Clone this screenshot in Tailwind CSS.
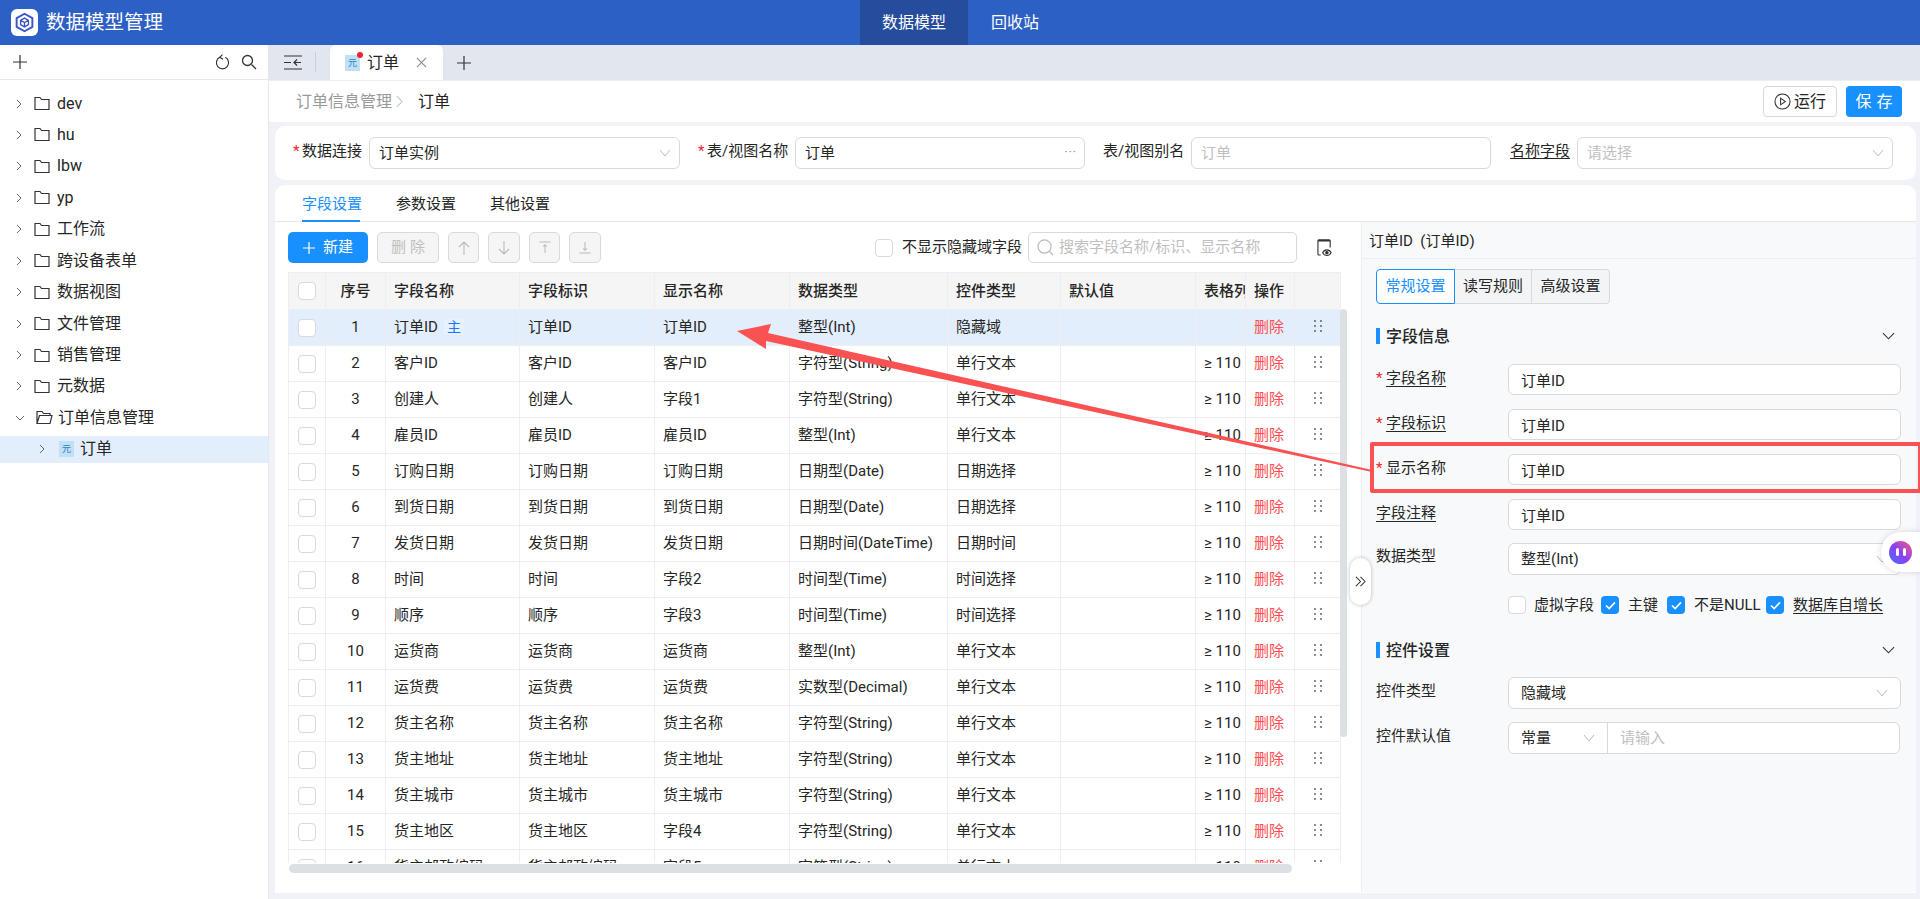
<!DOCTYPE html>
<html lang="zh">
<head>
  <meta charset="UTF-8" />
  <title>数据模型管理</title>
  <script src="https://cdn.jsdelivr.net/npm/@tailwindcss/browser@4"></script>
</head>
<body class="bg-[#f0f2f7] text-[15px] text-[#262626] font-['Roboto','Noto_Sans_CJK_SC',sans-serif]">
<div class="relative w-[1920px] h-[899px] overflow-hidden">

  <!-- top bar -->
  <header class="h-[45px] bg-[#2d60c4] flex text-white">
    <div class="w-[860px] flex items-center pl-[11px]">
      <div class="w-[27px] h-[27px] bg-white rounded-[6px] flex items-center justify-center">
        <svg viewBox="0 0 24 24" class="w-[21px] h-[21px]" fill="none" stroke="#3a55c8" stroke-width="2.200"><path d="M12 2l9 5v10l-9 5-9-5V7z"/><path d="M7.500 9.500L12 7l4.500 2.500v5L12 17l-4.500-2.500z M7.500 9.500L12 12l4.500-2.500M12 12v5" stroke-width="1.500"/></svg>
      </div>
      <span class="ml-[8px] text-[19.500px] whitespace-nowrap">数据模型管理</span>
    </div>
    <div class="w-[108px] bg-[#264d9d] flex items-center justify-center text-[16px]">数据模型</div>
    <div class="w-[94px] flex items-center justify-center text-[16px]">回收站</div>
  </header>

  <div class="flex h-[854px]">
    <!-- tree -->
    <aside class="w-[269px] bg-white border-r border-[#e5e7eb] shrink-0">
      <div class="h-[35px] border-b border-[#e8e8e8] flex items-center pl-[13px] pr-[11px]">
        <svg viewBox="0 0 14 14" class="w-[14px] h-[14px]" stroke="#333" stroke-width="1.200"><path d="M7 0v14M0 7h14"/></svg>
        <svg viewBox="0 0 16 18" class="w-[15px] h-[17px] ml-auto" fill="none" stroke="#333" stroke-width="1.200"><path d="M5 3.500a6.500 6.500 0 1 0 6 0M8 0.500L5 3.500l3.500 2"/></svg>
        <svg viewBox="0 0 16 16" class="w-[16px] h-[16px] ml-[11px]" fill="none" stroke="#333" stroke-width="1.300"><circle cx="6.500" cy="6.500" r="5"/><path d="M10.500 10.500L15 15"/></svg>
      </div>
      <div id="tree" class="pt-[10px]"></div>
    </aside>

    <!-- main column -->
    <main class="flex-1 min-w-0">
      <div class="h-[35px] bg-[#e2e6ef] flex items-end">
        <div class="w-[46px] h-[35px] flex items-center pl-[15px]">
          <svg viewBox="0 0 18 15" class="w-[18px] h-[15px]" fill="none" stroke="#333" stroke-width="1.200"><path d="M0 1h18M0 14h18M0 7.500h7M17 7.500h-7M13 4.500l-3 3 3 3"/></svg>
        </div>
        <div class="w-px h-[20px] bg-[#c9ced8] mb-[8px]"></div>
        <div class="ml-[14px] w-[113px] h-[35px] bg-white rounded-t-[6px] flex items-center pl-[15px]">
          <span class="relative w-[15px] h-[16px] bg-[#bfe0f5] text-[#2a7fb8] text-[9px] leading-[16px] text-center">元<span class="absolute -top-[3px] -right-[3px] w-[6px] h-[6px] rounded-full bg-[#f5222d]"></span></span>
          <span class="ml-[7px] text-[16px]">订单</span>
          <svg viewBox="0 0 12 12" class="w-[11px] h-[11px] ml-[17px]" stroke="#888" stroke-width="1.100"><path d="M1 1l10 10M11 1L1 11"/></svg>
        </div>
        <svg viewBox="0 0 14 14" class="w-[14px] h-[14px] ml-[14px] mb-[10px]" stroke="#333" stroke-width="1.200"><path d="M7 0v14M0 7h14"/></svg>
      </div>

      <!-- breadcrumb -->
      <div class="h-[42px] bg-white border-t border-[#eceef2] flex items-center pl-[27px] pr-[18px]">
        <span class="text-[16px] text-[#999]">订单信息管理</span>
        <svg viewBox="0 0 8 14" class="w-[7px] h-[13px] ml-[4px]" fill="none" stroke="#999" stroke-width="1"><path d="M1 1l6 6-6 6"/></svg>
        <span class="ml-[15px] text-[16px] text-[#222]">订单</span>
        <button class="ml-auto w-[74px] h-[31px] border border-[#d9d9d9] rounded-[4px] bg-white flex items-center justify-center gap-[3px] text-[16px]">
          <svg viewBox="0 0 18 18" class="w-[17px] h-[17px]" fill="none" stroke="#333" stroke-width="1.100"><circle cx="9" cy="9" r="8"/><path d="M7 5.500l5 3.500-5 3.500z"/></svg>运行
        </button>
        <button class="ml-[9px] w-[56px] h-[31px] rounded-[4px] bg-[#1890ff] text-white text-[16px] tracking-[5px] pl-[5px]">保存</button>
      </div>

      <!-- connection form -->
      <div class="mt-[4px] ml-[6px] mr-[4px] h-[54px] bg-white rounded-[10px] flex items-center pl-[18px] whitespace-nowrap">
        <label class="w-[68px] -mt-[3px]"><span class="text-[#f5222d] inline-block w-[9px]">*</span>数据连接</label>
        <div class="ml-[8px] w-[311px] h-[32px] border border-[#d9d9d9] rounded-[6px] flex items-center justify-between pl-[9px] pr-[8px]">订单实例
          <svg viewBox="0 0 12 8" class="w-[12px] h-[8px]" fill="none" stroke="#bbb"><path d="M1 1l5 6 5-6"/></svg>
        </div>
        <label class="ml-[18px] w-[89px] -mt-[3px]"><span class="text-[#f5222d] inline-block w-[9px]">*</span>表/视图名称</label>
        <div class="ml-[8px] w-[290px] h-[32px] border border-[#d9d9d9] rounded-[6px] flex items-center justify-between pl-[9px] pr-[7px]">订单<span class="text-[#888] text-[12px] tracking-[1px] -mt-[2px]">···</span></div>
        <label class="ml-[18px] w-[80px] -mt-[3px]">表/视图别名</label>
        <input placeholder="订单" class="ml-[8px] w-[300px] h-[32px] border border-[#d9d9d9] rounded-[6px] px-[9px] placeholder-[#bfbfbf]" />
        <label class="ml-[19px] w-[59px] -mt-[3px] underline underline-offset-2">名称字段</label>
        <div class="ml-[8px] w-[316px] h-[32px] border border-[#d9d9d9] rounded-[6px] flex items-center justify-between pl-[9px] pr-[8px] text-[#bfbfbf]">请选择
          <svg viewBox="0 0 12 8" class="w-[12px] h-[8px]" fill="none" stroke="#bbb"><path d="M1 1l5 6 5-6"/></svg>
        </div>
      </div>

      <!-- field designer card -->
      <div class="mt-[5px] ml-[6px] mr-[4px] h-[708px] bg-white rounded-t-[10px] overflow-hidden">
        <div class="h-[37px] border-b border-[#e8e8e8] flex pl-[27px] gap-[36px]">
          <span class="w-[58px] h-[37px] leading-[39px] text-[#1890ff] border-b-2 border-[#1890ff] whitespace-nowrap">字段设置</span>
          <span class="w-[58px] leading-[39px] whitespace-nowrap">参数设置</span>
          <span class="w-[58px] leading-[39px] whitespace-nowrap">其他设置</span>
        </div>
        <div class="flex h-[670px]">
          <!-- left: table -->
          <section class="w-[1086px] shrink-0 pl-[13px] pt-[10px]">
            <div class="flex items-center h-[31px]">
              <button class="w-[80px] h-[31px] bg-[#1890ff] text-white rounded-[5px] flex items-center justify-center gap-[8px]">
                <svg viewBox="0 0 12 12" class="w-[12px] h-[12px]" stroke="#fff" stroke-width="1.200"><path d="M6 0v12M0 6h12"/></svg>新建
              </button>
              <button class="ml-[9px] w-[62px] h-[31px] bg-[#f5f5f5] border border-[#d9d9d9] rounded-[5px] text-[#bfbfbf] tracking-[4px] pl-[4px]">删除</button>
              <button class="ml-[9px] w-[31px] h-[31px] bg-[#f5f5f5] border border-[#d9d9d9] rounded-[5px] flex items-center justify-center"><svg viewBox="0 0 12 14" class="w-[12px] h-[14px]" fill="none" stroke="#bbb" stroke-width="1.100"><path d="M6 14V1M1 6l5-5 5 5"/></svg></button>
              <button class="ml-[9px] w-[32px] h-[31px] bg-[#f5f5f5] border border-[#d9d9d9] rounded-[5px] flex items-center justify-center"><svg viewBox="0 0 12 14" class="w-[12px] h-[14px]" fill="none" stroke="#bbb" stroke-width="1.100"><path d="M6 0v13M1 8l5 5 5-5"/></svg></button>
              <button class="ml-[9px] w-[31px] h-[31px] bg-[#f5f5f5] border border-[#d9d9d9] rounded-[5px] flex items-center justify-center"><svg viewBox="0 0 12 14" class="w-[12px] h-[13px]" fill="none" stroke="#bbb" stroke-width="1.100"><path d="M0 1h12M6 13V4M4 6l2-2 2 2"/></svg></button>
              <button class="ml-[9px] w-[32px] h-[31px] bg-[#f5f5f5] border border-[#d9d9d9] rounded-[5px] flex items-center justify-center"><svg viewBox="0 0 12 14" class="w-[12px] h-[13px]" fill="none" stroke="#bbb" stroke-width="1.100"><path d="M0 13h12M6 1v9M4 8l2 2 2-2"/></svg></button>
              <span class="ml-[274px] w-[18px] h-[18px] border border-[#d9d9d9] rounded-[4px] bg-white"></span>
              <span class="ml-[9px] w-[117px] whitespace-nowrap">不显示隐藏域字段</span>
              <div class="ml-[9px] w-[269px] h-[31px] border border-[#d9d9d9] rounded-[5px] flex items-center pl-[8px] text-[#bfbfbf] whitespace-nowrap">
                <svg viewBox="0 0 18 18" class="w-[17px] h-[17px] mr-[5px]" fill="none" stroke="#bbb" stroke-width="1.300"><circle cx="8" cy="8" r="7"/><path d="M13 13l4 4"/></svg>搜索字段名称/标识、显示名称
              </div>
              <svg viewBox="0 0 17 19" class="w-[16px] h-[18px] ml-[20px]" fill="none" stroke="#333" stroke-width="1.200"><path d="M14 9V2a1 1 0 0 0-1-1H2a1 1 0 0 0-1 1v14a1 1 0 0 0 1 1h2"/><path d="M1 1.500h13" stroke-width="2"/><path d="M6 14.500c1-2 2.500-3 4.500-3s3.500 1 4.500 3c-1 2-2.500 3-4.500 3s-3.500-1-4.500-3z"/><circle cx="10.500" cy="14.500" r="1.300" fill="#333"/></svg>
            </div>

            <!-- table, clipped by the scroll box -->
            <div class="relative mt-[9px] w-[1059px] h-[601px]">
              <div class="h-[591px] overflow-hidden">
                <table class="table-fixed w-[1052px] border-collapse">
                  <colgroup>
                    <col class="w-[37px]"><col class="w-[60px]"><col class="w-[134px]"><col class="w-[135px]"><col class="w-[135px]"><col class="w-[158px]"><col class="w-[113px]"><col class="w-[135px]"><col class="w-[50px]"><col class="w-[49px]"><col class="w-[46px]">
                  </colgroup>
                  <thead class="bg-[#f5f5f5]">
                    <tr class="h-[37px]">
                      <th class="border border-[#eeeeee] pl-[9px]"><span class="block w-[18px] h-[18px] border border-[#d9d9d9] rounded-[4px] bg-white"></span></th>
                      <th class="border border-[#eeeeee] font-medium text-center">序号</th>
                      <th class="border border-[#eeeeee] font-medium text-left pl-[8px]">字段名称</th>
                      <th class="border border-[#eeeeee] font-medium text-left pl-[8px]">字段标识</th>
                      <th class="border border-[#eeeeee] font-medium text-left pl-[8px]">显示名称</th>
                      <th class="border border-[#eeeeee] font-medium text-left pl-[8px]">数据类型</th>
                      <th class="border border-[#eeeeee] font-medium text-left pl-[8px]">控件类型</th>
                      <th class="border border-[#eeeeee] font-medium text-left pl-[8px]">默认值</th>
                      <th class="border border-[#eeeeee] font-medium text-left pl-[8px] overflow-hidden whitespace-nowrap">表格列</th>
                      <th class="border border-[#eeeeee] font-medium text-left pl-[8px]">操作</th>
                      <th class="border border-[#eeeeee]"></th>
                    </tr>
                  </thead>
                  <tbody id="rows"></tbody>
                </table>
              </div>
              <div class="absolute left-[1px] top-[592px] w-[1003px] h-[9px] rounded-full bg-[#dcdfe4]"></div>
              <div class="absolute left-[1052px] top-[37px] w-[7px] h-[428px] rounded-full bg-[#dcdfe4]"></div>
            </div>
          </section>

          <!-- right: properties -->
          <section class="flex-1 bg-[#f8f9fb] border-l border-[#eceef2] pl-[14px] pr-[15px]">
            <div class="h-[37px] -ml-[14px] -mr-[15px] pl-[7px] pt-[3px] border-b border-[#eceef2] flex items-center whitespace-pre">订单ID  (订单ID)</div>
            <div class="mt-[10px] flex w-[234px] h-[35px]">
              <span class="w-[79px] bg-white border border-[#1890ff] text-[#1890ff] rounded-l-[4px] flex items-center justify-center">常规设置</span>
              <span class="w-[77px] bg-[#f3f4f6] border-y border-r border-[#d9d9d9] flex items-center justify-center">读写规则</span>
              <span class="w-[78px] bg-[#f3f4f6] border-y border-r border-[#d9d9d9] rounded-r-[4px] flex items-center justify-center">高级设置</span>
            </div>

            <div class="mt-[22px] h-[20px] flex items-center pr-[6px]">
              <span class="w-[4px] h-[16px] bg-[#1890ff]"></span>
              <b class="ml-[6px] pt-[2px] text-[16px] font-medium">字段信息</b>
              <svg viewBox="0 0 14 8" class="w-[13px] h-[8px] ml-auto" fill="none" stroke="#333" stroke-width="1.200"><path d="M1 1l6 6 6-6"/></svg>
            </div>

            <div class="mt-[18px] flex items-start h-[31px]">
              <label class="w-[132px] whitespace-nowrap pt-[3px]"><span class="text-[#f5222d] inline-block w-[10px]">*</span><span class="underline underline-offset-3">字段名称</span></label>
              <input value="订单ID" class="w-[393px] h-[31px] border border-[#d9d9d9] rounded-[6px] bg-white px-[12px]" />
            </div>
            <div class="mt-[14px] flex items-start h-[31px]">
              <label class="w-[132px] whitespace-nowrap pt-[3px]"><span class="text-[#f5222d] inline-block w-[10px]">*</span><span class="underline underline-offset-3">字段标识</span></label>
              <input value="订单ID" class="w-[393px] h-[31px] border border-[#d9d9d9] rounded-[6px] bg-white px-[12px]" />
            </div>
            <div class="mt-[14px] flex items-start h-[31px]">
              <label class="w-[132px] whitespace-nowrap pt-[3px]"><span class="text-[#f5222d] inline-block w-[10px]">*</span>显示名称</label>
              <input value="订单ID" class="w-[393px] h-[31px] border border-[#d9d9d9] rounded-[6px] bg-white px-[12px]" />
            </div>
            <div class="mt-[14px] flex items-start h-[31px]">
              <label class="w-[132px] pt-[3px]"><span class="underline underline-offset-3">字段注释</span></label>
              <input value="订单ID" class="w-[393px] h-[31px] border border-[#d9d9d9] rounded-[6px] bg-white px-[12px]" />
            </div>
            <div class="mt-[13px] flex items-start h-[32px]">
              <label class="w-[132px] pt-[2px]">数据类型</label>
              <div class="w-[393px] h-[32px] border border-[#d9d9d9] rounded-[6px] bg-white px-[12px] flex items-center justify-between">整型(Int)
                <svg viewBox="0 0 12 8" class="w-[12px] h-[8px]" fill="none" stroke="#bbb"><path d="M1 1l5 6 5-6"/></svg>
              </div>
            </div>

            <div class="mt-[21px] ml-[132px] flex items-center h-[18px] whitespace-nowrap">
              <span class="w-[18px] h-[18px] border border-[#d9d9d9] rounded-[4px] bg-white"></span>
              <span class="ml-[8px] w-[60px]">虚拟字段</span>
              <span class="ml-[7px] w-[18px] h-[18px] rounded-[4px] bg-[#1890ff] flex items-center justify-center"><svg viewBox="0 0 12 10" class="w-[11px] h-[9px]" fill="none" stroke="#fff" stroke-width="1.800"><path d="M1 5l3.500 3.500L11 1.500"/></svg></span>
              <span class="ml-[9px] w-[30px]">主键</span>
              <span class="ml-[9px] w-[18px] h-[18px] rounded-[4px] bg-[#1890ff] flex items-center justify-center"><svg viewBox="0 0 12 10" class="w-[11px] h-[9px]" fill="none" stroke="#fff" stroke-width="1.800"><path d="M1 5l3.500 3.500L11 1.500"/></svg></span>
              <span class="ml-[9px] w-[63px]">不是NULL</span>
              <span class="ml-[9px] w-[18px] h-[18px] rounded-[4px] bg-[#1890ff] flex items-center justify-center"><svg viewBox="0 0 12 10" class="w-[11px] h-[9px]" fill="none" stroke="#fff" stroke-width="1.800"><path d="M1 5l3.500 3.500L11 1.500"/></svg></span>
              <span class="ml-[9px] underline underline-offset-3">数据库自增长</span>
            </div>

            <div class="mt-[26px] h-[20px] flex items-center pr-[6px]">
              <span class="w-[4px] h-[16px] bg-[#1890ff]"></span>
              <b class="ml-[6px] pt-[2px] text-[16px] font-medium">控件设置</b>
              <svg viewBox="0 0 14 8" class="w-[13px] h-[8px] ml-auto" fill="none" stroke="#333" stroke-width="1.200"><path d="M1 1l6 6 6-6"/></svg>
            </div>

            <div class="mt-[17px] flex items-start h-[32px]">
              <label class="w-[132px] pt-[3px]">控件类型</label>
              <div class="w-[393px] h-[32px] border border-[#d9d9d9] rounded-[6px] bg-white px-[12px] flex items-center justify-between">隐藏域
                <svg viewBox="0 0 12 8" class="w-[12px] h-[8px]" fill="none" stroke="#bbb"><path d="M1 1l5 6 5-6"/></svg>
              </div>
            </div>
            <div class="mt-[13px] flex items-start h-[32px]">
              <label class="w-[132px] pt-[3px]">控件默认值</label>
              <div class="w-[392px] h-[32px] border border-[#d9d9d9] rounded-[6px] bg-white flex items-center">
                <span class="w-[99px] h-full border-r border-[#d9d9d9] px-[12px] flex items-center justify-between">常量<svg viewBox="0 0 12 8" class="w-[12px] h-[8px]" fill="none" stroke="#bbb"><path d="M1 1l5 6 5-6"/></svg></span>
                <input placeholder="请输入" class="flex-1 min-w-0 px-[12px] placeholder-[#bfbfbf]" />
              </div>
            </div>
          </section>
        </div>
      </div>
    </main>
  </div>

  <!-- floating over the panels -->
  <button class="absolute left-[1350px] top-[558px] w-[21px] h-[47px] bg-white rounded-full shadow-[0_0_4px_rgba(0,0,0,0.25)] flex items-center justify-center">
    <svg viewBox="0 0 12 12" class="w-[11px] h-[11px]" fill="none" stroke="#333" stroke-width="1.100"><path d="M1 1l5 5-5 5M6 1l5 5-5 5"/></svg>
  </button>
  <div class="absolute left-[1881px] top-[532px] w-[39px] h-[40px] bg-white rounded-l-full shadow-[0_0_6px_rgba(0,0,0,0.15)] flex items-center pl-[8px]">
    <span class="w-[23px] h-[23px] rounded-full bg-linear-to-tr from-[#2a6cff] via-[#8d3cf0] to-[#ff3f6c] flex items-center justify-center gap-[4px]">
      <i class="w-[3px] h-[8px] rounded-full bg-white"></i><i class="w-[3px] h-[8px] rounded-full bg-white"></i>
    </span>
  </div>

  <!-- annotation: red frame and arrow -->
  <div class="absolute left-[1370px] top-[442px] w-[552px] h-[51px] border-[4px] border-[#fa5252] rounded-[2px]"></div>
  <svg class="absolute left-0 top-0 pointer-events-none" width="1920" height="899"><polygon points="737,331 771,324 768,333 1372,470 1372,472 766,341 766,349" fill="#fa5252"/></svg>
</div>

<script>
  const treeItems = ['dev', 'hu', 'lbw', 'yp', '工作流', '跨设备表单', '数据视图', '文件管理', '销售管理', '元数据'];
  const chevron = '<svg viewBox="0 0 6 10" class="w-[6px] h-[10px]" fill="none" stroke="#666" stroke-width="1"><path d="M1 1l4 4-4 4"/></svg>';
  const folder = '<svg viewBox="0 0 16 15" class="w-[16px] h-[15px] ml-[12px]" fill="none" stroke="#333" stroke-width="1.200"><path d="M1 13.500V1.500h5l1.500 2h7.500v10z"/></svg>';
  let tree = treeItems.map(name => `<div class="h-[27px] mb-[4.450px] flex items-center pl-[16px] text-[16px]">${chevron}${folder}<span class="ml-[7px]">${name}</span></div>`).join('');
  tree += `<div class="h-[27px] mb-[4.450px] flex items-center pl-[15px] text-[16px]"><svg viewBox="0 0 10 6" class="w-[10px] h-[6px]" fill="none" stroke="#666"><path d="M1 1l4 4 4-4"/></svg><svg viewBox="0 0 17 15" class="w-[17px] h-[15px] ml-[11px]" fill="none" stroke="#333" stroke-width="1.200"><path d="M1 13.500V1.500h5l1.500 2h6.500v2M1 13.500l2.500-8h12.500l-2 8z"/></svg><span class="ml-[5px]">订单信息管理</span></div>`;
  tree += `<div class="h-[27px] flex items-center pl-[39px] text-[16px] bg-[#e3eefc]">${chevron}<span class="ml-[14px] w-[15px] h-[16px] bg-[#bfe0f5] text-[#2a7fb8] text-[9px] leading-[16px] text-center">元</span><span class="ml-[6px]">订单</span></div>`;
  document.getElementById('tree').innerHTML = tree;

  const S = '字符型(String)', T = '单行文本';
  const fields = [
    ['订单ID', '订单ID', '订单ID', '整型(Int)', '隐藏域'],
    ['客户ID', '客户ID', '客户ID', S, T],
    ['创建人', '创建人', '字段1', S, T],
    ['雇员ID', '雇员ID', '雇员ID', '整型(Int)', T],
    ['订购日期', '订购日期', '订购日期', '日期型(Date)', '日期选择'],
    ['到货日期', '到货日期', '到货日期', '日期型(Date)', '日期选择'],
    ['发货日期', '发货日期', '发货日期', '日期时间(DateTime)', '日期时间'],
    ['时间', '时间', '字段2', '时间型(Time)', '时间选择'],
    ['顺序', '顺序', '字段3', '时间型(Time)', '时间选择'],
    ['运货商', '运货商', '运货商', '整型(Int)', T],
    ['运货费', '运货费', '运货费', '实数型(Decimal)', T],
    ['货主名称', '货主名称', '货主名称', S, T],
    ['货主地址', '货主地址', '货主地址', S, T],
    ['货主城市', '货主城市', '货主城市', S, T],
    ['货主地区', '货主地区', '字段4', S, T],
    ['货主邮政编码', '货主邮政编码', '字段5', S, T],
  ];
  const grip = '<svg viewBox="0 0 8 12" class="w-[8px] h-[12px] mx-auto -mt-[4px]" fill="#555"><circle cx="1" cy="1" r="0.900"/><circle cx="7" cy="1" r="0.900"/><circle cx="1" cy="6" r="0.900"/><circle cx="7" cy="6" r="0.900"/><circle cx="1" cy="11" r="0.900"/><circle cx="7" cy="11" r="0.900"/></svg>';
  document.getElementById('rows').innerHTML = fields.map((f, i) => {
    const first = i === 0;
    const badge = first ? '<span class="ml-[6px] px-[3px] text-[14px] text-[#1677ff] bg-[#e8f2fe]">主</span>' : '';
    const width = first ? '' : '≥ 110';
    return `<tr class="h-[36px] ${first ? 'bg-[#e3eefc]' : ''}">
      <td class="border border-[#eeeeee] pl-[9px]"><span class="block w-[18px] h-[18px] border border-[#d9d9d9] rounded-[4px] bg-white"></span></td>
      <td class="border border-[#eeeeee] text-center">${i + 1}</td>
      <td class="border border-[#eeeeee] pl-[8px] whitespace-nowrap">${f[0]}${badge}</td>
      <td class="border border-[#eeeeee] pl-[8px] whitespace-nowrap">${f[1]}</td>
      <td class="border border-[#eeeeee] pl-[8px]">${f[2]}</td>
      <td class="border border-[#eeeeee] pl-[8px] whitespace-nowrap">${f[3]}</td>
      <td class="border border-[#eeeeee] pl-[8px]">${f[4]}</td>
      <td class="border border-[#eeeeee]"></td>
      <td class="border border-[#eeeeee] pl-[8px] whitespace-nowrap">${width}</td>
      <td class="border border-[#eeeeee] pl-[8px] text-[#ff4d4f]">删除</td>
      <td class="border border-[#eeeeee]">${grip}</td>
    </tr>`;
  }).join('');
</script>
</body>
</html>
